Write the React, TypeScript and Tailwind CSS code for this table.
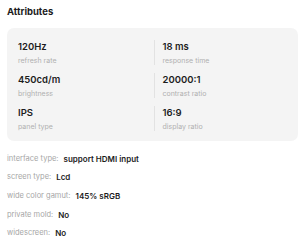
const specs = [
  { value: "120Hz", label: "refresh rate" },
  { value: "18 ms", label: "response time" },
  { value: "450cd/m", label: "brightness" },
  { value: "20000:1", label: "contrast ratio" },
  { value: "IPS", label: "panel type" },
  { value: "16:9", label: "display ratio" },
];

const details = [
  { label: "interface type:", value: "support HDMI input" },
  { label: "screen type:", value: "Lcd" },
  { label: "wide color gamut:", value: "145% sRGB" },
  { label: "private mold:", value: "No" },
  { label: "widescreen:", value: "No" },
];

export default function App() {
  return (
    <main
      className="min-h-screen bg-white pl-[7px] pr-[2px] pt-[4px] text-[#1c1c1c]"
      style={{ fontFamily: "Inter, 'Noto Sans', sans-serif" }}
    >
      <h2 className="text-[9.5px] font-bold leading-[15px]">Attributes</h2>

      {/* 参数卡片 */}
      <div className="mt-[9px] grid grid-cols-2 gap-y-[8px] rounded-[7px] bg-[#f4f4f4] pb-[10.5px] pl-[11px] pr-[9px] pt-[11.5px]">
        {specs.map((s, i) => (
          <div key={s.label} className={i % 2 === 1 ? "border-l border-[#e2e2e2] pl-[8px]" : ""}>
            <div className="text-[9.5px] font-semibold leading-[13px]">{s.value}</div>
            <div className="mt-[4px] text-[7px] leading-[8px] text-[#b0b0b0]">{s.label}</div>
          </div>
        ))}
      </div>

      {/* 其他属性 */}
      <ul className="mt-[8.75px]">
        {details.map((d) => (
          <li key={d.label} className="flex items-center gap-[5px] leading-[18.6px]">
            <span className="text-[7.5px] text-[#a6a6a6]">{d.label}</span>
            <span className="text-[8px] font-semibold">{d.value}</span>
          </li>
        ))}
      </ul>
    </main>
  );
}
